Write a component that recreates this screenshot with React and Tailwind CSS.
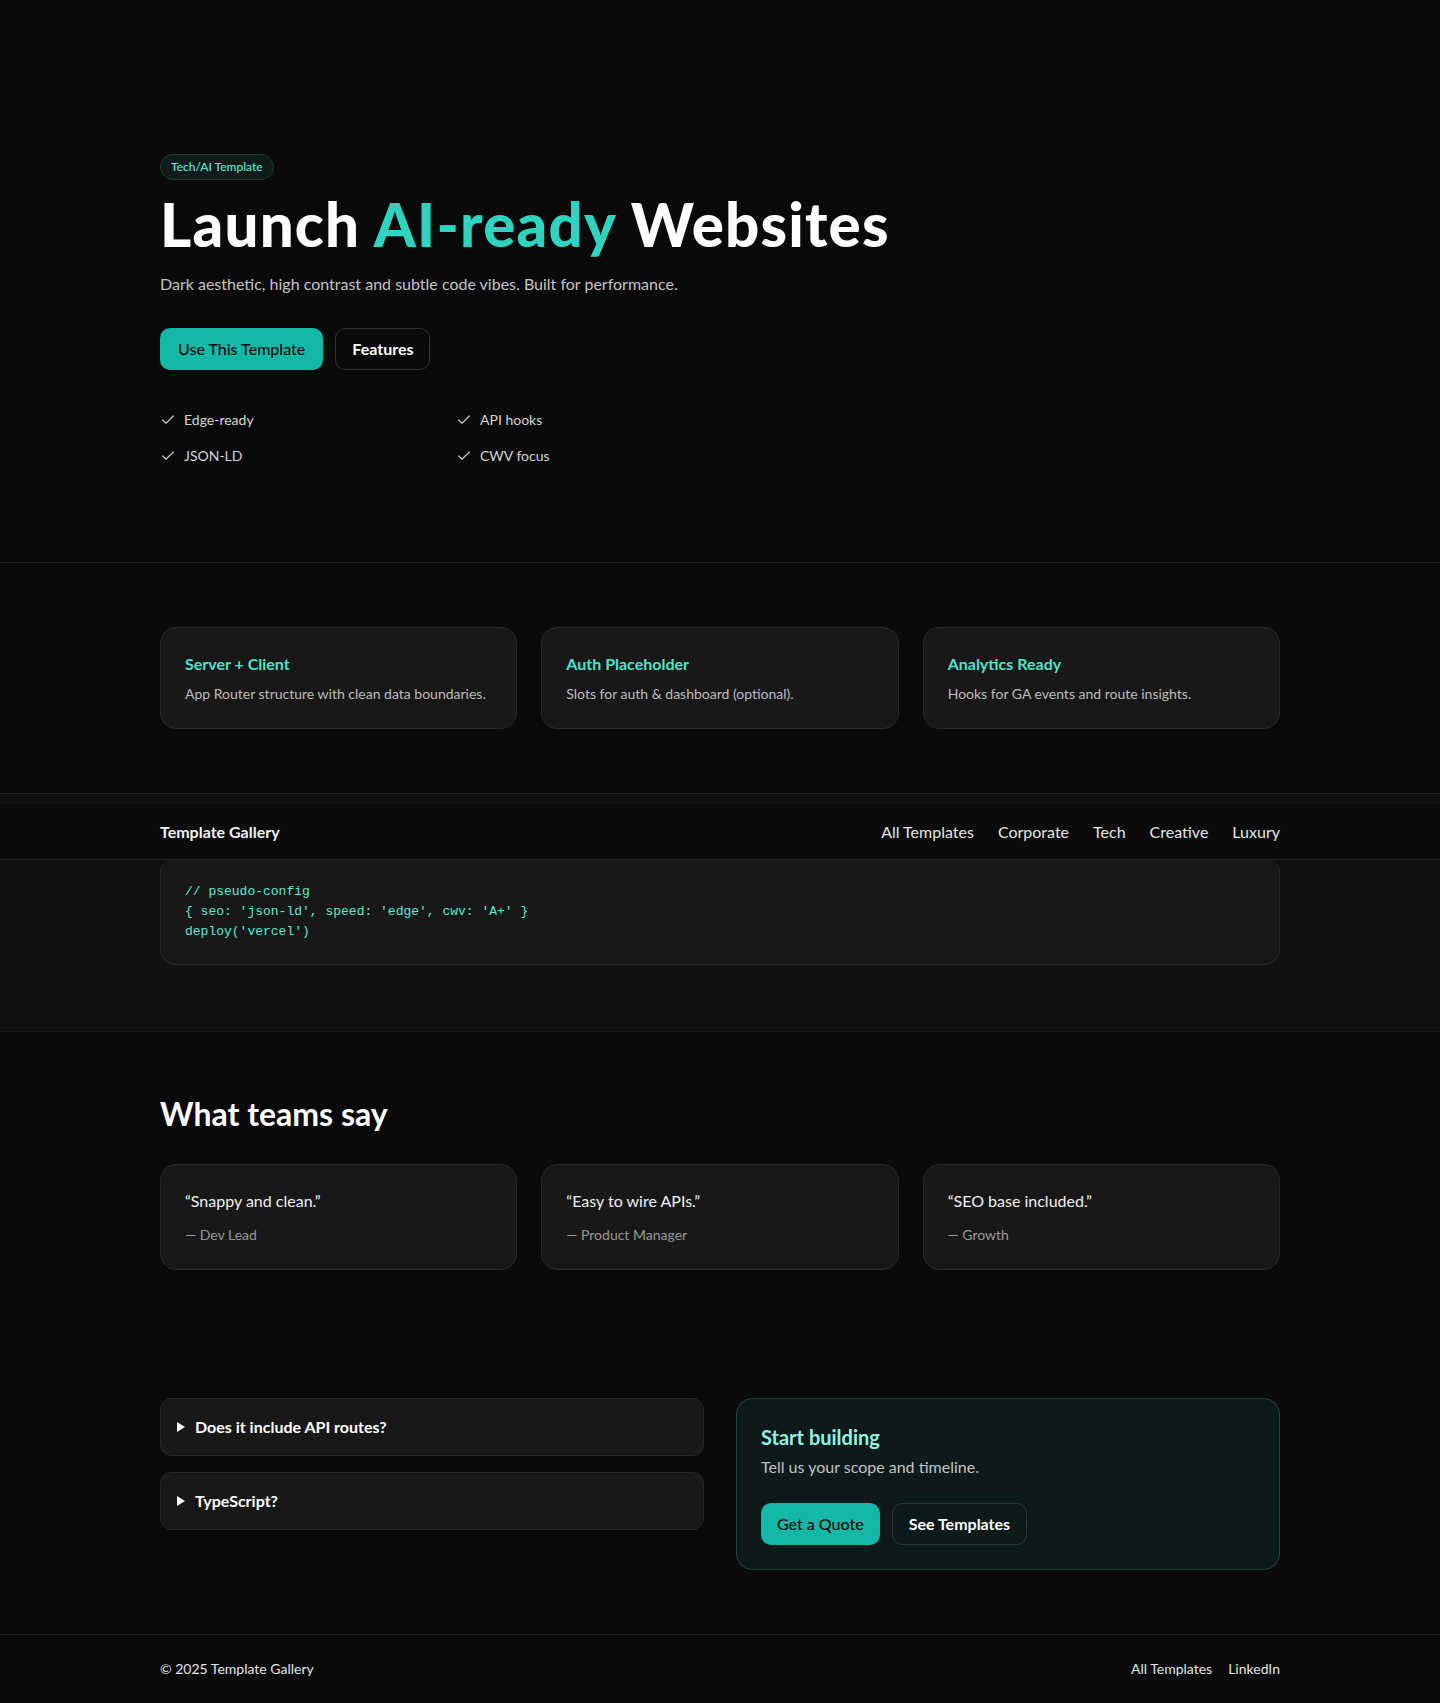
import { Check } from "lucide-react";

const features = [
  { title: "Server + Client", text: "App Router structure with clean data boundaries." },
  { title: "Auth Placeholder", text: "Slots for auth & dashboard (optional)." },
  { title: "Analytics Ready", text: "Hooks for GA events and route insights." },
];

const quotes = [
  { text: "“Snappy and clean.”", who: "— Dev Lead" },
  { text: "“Easy to wire APIs.”", who: "— Product Manager" },
  { text: "“SEO base included.”", who: "— Growth" },
];

const navLinks = ["All Templates", "Corporate", "Tech", "Creative", "Luxury"];

function Triangle() {
  return (
    <svg className="w-2 h-2.5 shrink-0" viewBox="0 0 8 10" fill="currentColor">
      <path d="M0 0 8 5 0 10z" />
    </svg>
  );
}

export default function App() {
  return (
    <div className="min-h-screen bg-[#0a0a0a] text-white font-['Lato','Liberation_Sans',sans-serif]">

      {/* HERO */}
      <section className="pt-[153px] pb-24">
        <div className="max-w-6xl mx-auto px-4">
          <span className="inline-block rounded-full border border-[#1f3a35] bg-[#0f1c1a] px-2.5 py-1 text-xs font-medium text-[#5eead4]">
            Tech/AI Template
          </span>
          <h1 className="mt-3.5 text-6xl leading-none font-black tracking-[0.02em]">
            Launch <span className="text-[#2dd4bf]">AI-ready</span> Websites
          </h1>
          <p className="mt-4.5 text-base text-[#c4c4c4]">
            Dark aesthetic, high contrast and subtle code vibes. Built for performance.
          </p>
          <div className="mt-8 flex gap-3">
            <a href="#" className="rounded-[10px] bg-[#14b8a6] px-[18px] py-[9px] text-base font-medium text-[#0a0a0a]">
              Use This Template
            </a>
            <a href="#" className="rounded-[10px] border border-[#333] px-4 py-[8px] text-base font-bold text-white">
              Features
            </a>
          </div>
          <ul className="mt-10 grid grid-cols-2 gap-x-4 gap-y-4 w-[576px] text-sm text-[#d4d4d4]">
            {["Edge-ready", "API hooks", "JSON-LD", "CWV focus"].map((item) => (
              <li key={item} className="flex items-center gap-2">
                <Check className="size-4 text-[#bdbdbd]" strokeWidth={2} />
                {item}
              </li>
            ))}
          </ul>
        </div>
      </section>

      {/* FEATURES */}
      <section className="border-t border-[#1f1f1f] py-16">
        <div className="max-w-6xl mx-auto px-4 grid grid-cols-3 gap-6">
          {features.map((f) => (
            <div key={f.title} className="rounded-2xl border border-[#2a2a2a] bg-[#181818] p-6">
              <h3 className="text-base font-bold text-[#4fe3cb]">{f.title}</h3>
              <p className="mt-2 text-sm text-[#bdbdbd]">{f.text}</p>
            </div>
          ))}
        </div>
      </section>

      {/* GALLERY / CODE */}
      <section className="border-t border-[#222] bg-[#111] pt-[10px] pb-[66px]">
        <header className="h-14 border-b border-[#222] bg-[#0b0b0b]">
          <div className="max-w-6xl mx-auto px-4 h-full flex items-center justify-between">
            <span className="font-bold text-base text-[#f2f2f2]">Template Gallery</span>
            <nav className="flex items-center gap-6 text-base text-[#e5e5e5]">
              {navLinks.map((l) => (
                <a key={l} href="#">{l}</a>
              ))}
            </nav>
          </div>
        </header>
        <div className="max-w-6xl mx-auto px-4">
          <div className="rounded-b-2xl rounded-t-xl border border-[#2a2a2a] border-t-0 bg-[#181818] px-6 py-[22px]">
            <pre className="font-['Liberation_Mono','DejaVu_Sans_Mono',monospace] text-[13px] leading-5 text-[#5eead4]">
{`// pseudo-config
{ seo: 'json-ld', speed: 'edge', cwv: 'A+' }
deploy('vercel')`}
            </pre>
          </div>
        </div>
      </section>

      {/* TESTIMONIALS */}
      <section className="border-t border-[#1f1f1f] pt-16 pb-16">
        <div className="max-w-6xl mx-auto px-4">
          <h2 className="text-[32px] leading-9 font-bold mb-8">What teams say</h2>
          <div className="grid grid-cols-3 gap-6">
            {quotes.map((q) => (
              <div key={q.who} className="rounded-2xl border border-[#2a2a2a] bg-[#181818] p-6">
                <p className="text-base text-[#f0f0f0]">{q.text}</p>
                <p className="mt-3 text-sm text-[#9a9a9a]">{q.who}</p>
              </div>
            ))}
          </div>
        </div>
      </section>

      {/* FAQ + CTA */}
      <section className="pt-16 pb-16">
        <div className="max-w-6xl mx-auto px-4 grid grid-cols-2 gap-8 items-start">
          <div className="flex flex-col gap-4">
            {["Does it include API routes?", "TypeScript?"].map((q) => (
              <details key={q} className="rounded-xl border border-[#2a2a2a] bg-[#181818]">
                <summary className="flex items-center gap-2.5 px-4 py-4 text-base font-bold text-white cursor-pointer">
                  <Triangle />
                  {q}
                </summary>
              </details>
            ))}
          </div>
          <div className="rounded-2xl border border-[#1d4640] bg-[#0c1a1a] p-6">
            <h3 className="text-xl font-bold text-[#8ff5e0]">Start building</h3>
            <p className="mt-1 text-base text-[#c4c4c4]">Tell us your scope and timeline.</p>
            <div className="mt-6 flex gap-3">
              <a href="#" className="rounded-[10px] bg-[#14b8a6] px-4 py-[9px] text-base font-medium text-[#0a0a0a]">
                Get a Quote
              </a>
              <a href="#" className="rounded-[10px] border border-[#333] px-4 py-[8px] text-base font-bold text-white">
                See Templates
              </a>
            </div>
          </div>
        </div>
      </section>

      {/* FOOTER */}
      <footer className="border-t border-[#1f1f1f] py-6">
        <div className="max-w-6xl mx-auto px-4 flex items-center justify-between text-sm text-[#e5e5e5]">
          <span>© 2025 Template Gallery</span>
          <div className="flex gap-4">
            <a href="#">All Templates</a>
            <a href="#">LinkedIn</a>
          </div>
        </div>
      </footer>
    </div>
  );
}
